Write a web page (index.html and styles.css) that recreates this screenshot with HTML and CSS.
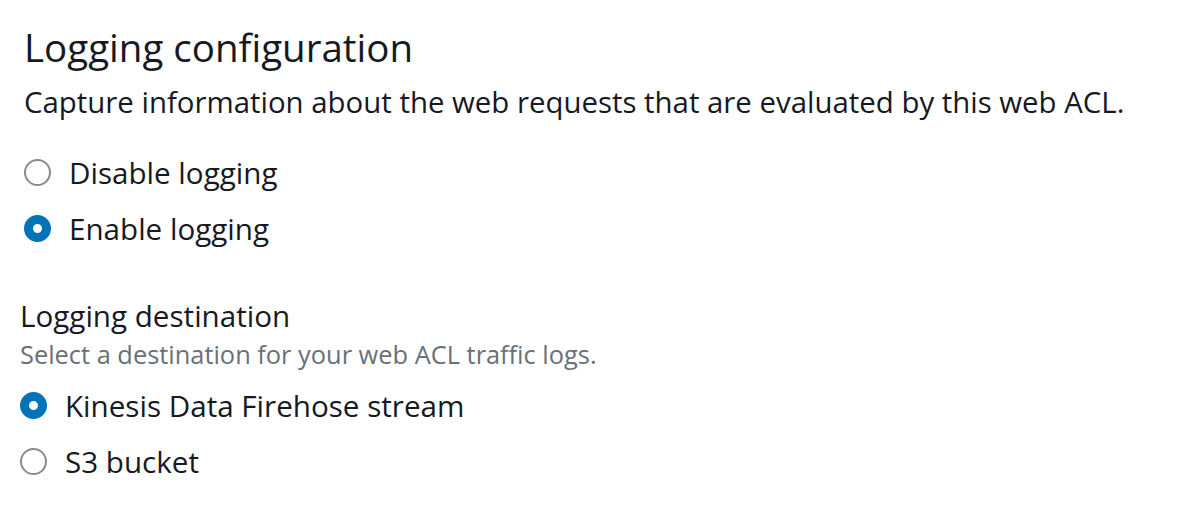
FILE: index.html
```html
<!DOCTYPE html>
<html lang="en">
  <head>
    <meta charset="UTF-8" />
    <meta name="viewport" content="width=device-width, initial-scale=1.0" />
    <title>Logging configuration</title>
    <link rel="stylesheet" href="styles.css">
  </head>
  <body>
    <main class="panel">
      <section class="config">
        <h1 class="title">Logging configuration</h1>
        <p class="desc">Capture information about the web requests that are evaluated by this web ACL.</p>
        <div class="radios">
          <label class="radio">
            <span class="dot"></span>
            <span class="label">Disable logging</span>
          </label>
          <label class="radio">
            <span class="dot checked"></span>
            <span class="label">Enable logging</span>
          </label>
        </div>
      </section>
      <section class="destination">
        <div class="field-label">Logging destination</div>
        <div class="hint">Select a destination for your web ACL traffic logs.</div>
        <div class="radios">
          <label class="radio">
            <span class="dot checked"></span>
            <span class="label">Kinesis Data Firehose stream</span>
          </label>
          <label class="radio">
            <span class="dot"></span>
            <span class="label">S3 bucket</span>
          </label>
        </div>
      </section>
    </main>
  </body>
</html>
```

FILE: styles.css
```css
body {
  margin: 0;
  background-color: #fff;
  color: #16191f;
  font-family: "Open Sans", "Noto Sans", sans-serif;
}
.panel {
  padding: 22px 0 0 0;
}
.config {
  padding-left: 24px;
}
.title {
  margin: 0;
  font-size: 38.5px;
  font-weight: 400;
  line-height: 50px;
}
.desc {
  margin: 12px 0 0 0;
  font-size: 29.4px;
  line-height: 36px;
}
.radios {
  display: flex;
  flex-direction: column;
}
.config .radios {
  margin-top: 24px;
}
.radio {
  display: flex;
  align-items: center;
  gap: 18px;
  height: 56px;
}
.dot {
  width: 23px;
  height: 23px;
  border: 2px solid #868c94;
  border-radius: 50%;
  box-sizing: content-box;
}
.dot.checked {
  width: 9px;
  height: 9px;
  border: 9px solid #0073bb;
  background-color: #fff;
}
.label {
  font-size: 29.6px;
}
.destination {
  padding-left: 20px;
  margin-top: 42px;
}
.field-label {
  font-size: 29.6px;
  line-height: 36px;
}
.hint {
  font-size: 25.4px;
  line-height: 40px;
  color: #687078;
}
.destination .radios {
  margin-top: 3px;
}
```
